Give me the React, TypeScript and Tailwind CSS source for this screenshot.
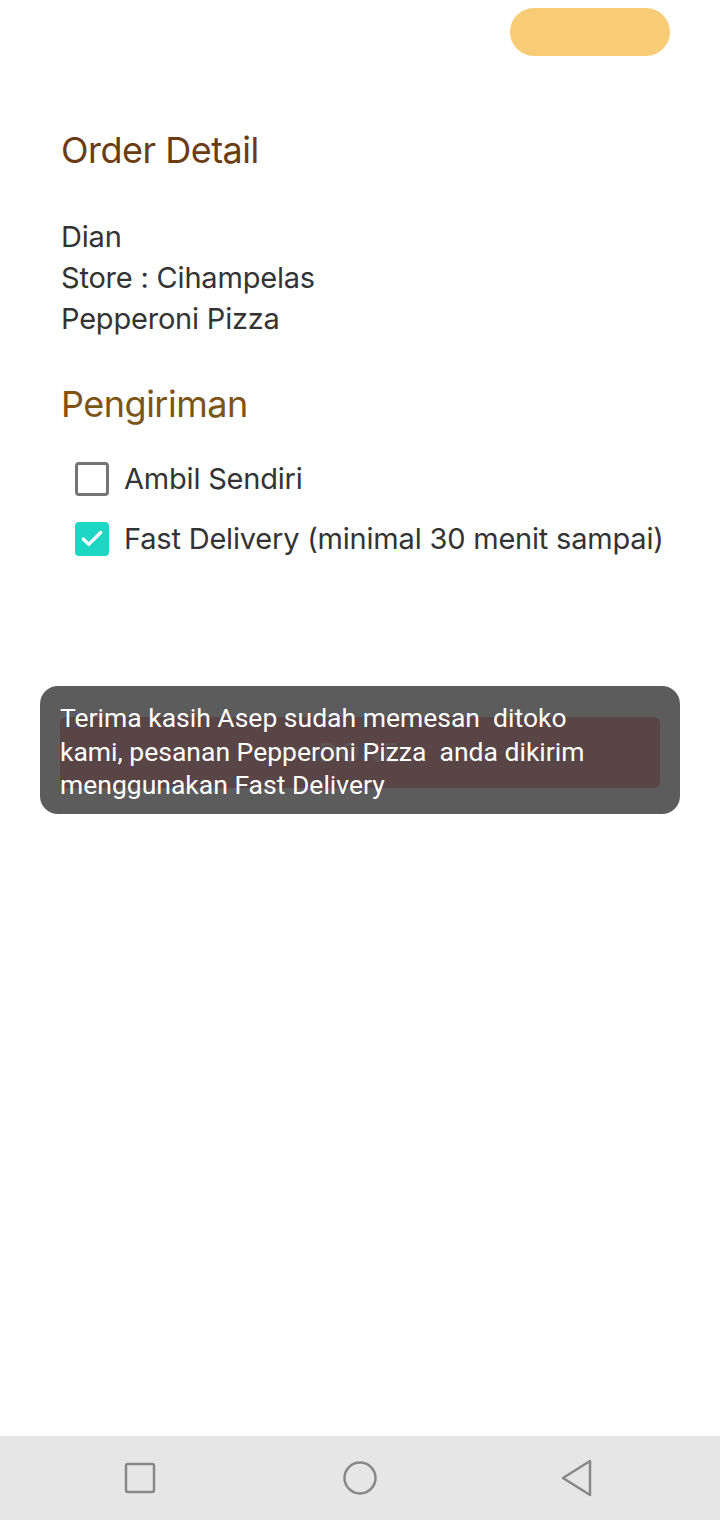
import { Check } from "lucide-react";

function Option({ label, checked }: { label: string; checked?: boolean }) {
  return (
    <div className="flex items-center h-[60px] pl-[15px]">
      {checked ? (
        <div className="w-[34px] h-[34px] shrink-0 rounded-[4px] bg-[#1dd6c4] flex items-center justify-center">
          <Check className="w-[26px] h-[26px] text-white" strokeWidth={3} />
        </div>
      ) : (
        <div className="w-[34px] h-[34px] shrink-0 rounded-[4px] border-[3px] border-[#747474]" />
      )}
      <span className="ml-[15px] text-[29px] text-[#333333] tracking-[-0.2px] whitespace-nowrap">{label}</span>
    </div>
  );
}

export default function App() {
  return (
    <div className="relative w-[720px] h-[1520px] bg-white flex flex-col font-['Inter',sans-serif]">
      <div className="flex justify-end pt-[8px] pr-[50px]">
        <div className="w-[160px] h-[48px] rounded-full bg-[#f8cc77]" />
      </div>

      <div className="flex-1 px-[61px]">
        <h1 className="mt-[72px] text-[36px] leading-[44px] text-[#6b3b11] tracking-[-0.5px]">Order Detail</h1>

        <div className="mt-[44px] text-[29px] leading-[41px] text-[#333333] tracking-[-0.2px]">
          <p>Dian</p>
          <p>Store : Cihampelas</p>
          <p>Pepperoni Pizza</p>
        </div>

        <h2 className="mt-[43px] text-[36px] leading-[44px] text-[#7b5416] tracking-[-0.5px]">Pengiriman</h2>

        <div className="mt-[23px] -ml-[1px]">
          <Option label="Ambil Sendiri" />
          <Option label="Fast Delivery (minimal 30 menit sampai)" checked />
        </div>

        <button className="mt-[148px] w-[600px] -ml-[1px] h-[71px] rounded-[6px] bg-[#fabec1] text-[26px] text-[#fdeaea] tracking-[2px]">
          DONE
        </button>
      </div>

      <div className="absolute left-[40px] top-[686px] w-[640px] h-[128px] rounded-[18px] bg-[rgba(0,0,0,0.64)] px-[20px] pt-[15px]">
        <p className="font-['Roboto',sans-serif] text-[26.5px] leading-[33.5px] text-white whitespace-nowrap">
          Terima kasih Asep sudah memesan&nbsp; ditoko
          <br />
          kami, pesanan Pepperoni Pizza&nbsp; anda dikirim
          <br />
          menggunakan Fast Delivery
        </p>
      </div>

      <div className="h-[84px] bg-[#e6e6e6] flex items-center pl-[124px]">
        <svg width="32" height="32" viewBox="0 0 32 32">
          <rect x="2" y="2" width="28" height="28" rx="2" fill="none" stroke="#888" strokeWidth="2.5" />
        </svg>
        <svg className="ml-[186px]" width="36" height="36" viewBox="0 0 36 36">
          <circle cx="18" cy="18" r="15.5" fill="none" stroke="#888" strokeWidth="2.5" />
        </svg>
        <svg className="ml-[181px]" width="36" height="40" viewBox="0 0 36 40">
          <path d="M31 3 L31 37 L4 20 Z" fill="none" stroke="#888" strokeWidth="2.5" strokeLinejoin="round" />
        </svg>
      </div>
    </div>
  );
}
